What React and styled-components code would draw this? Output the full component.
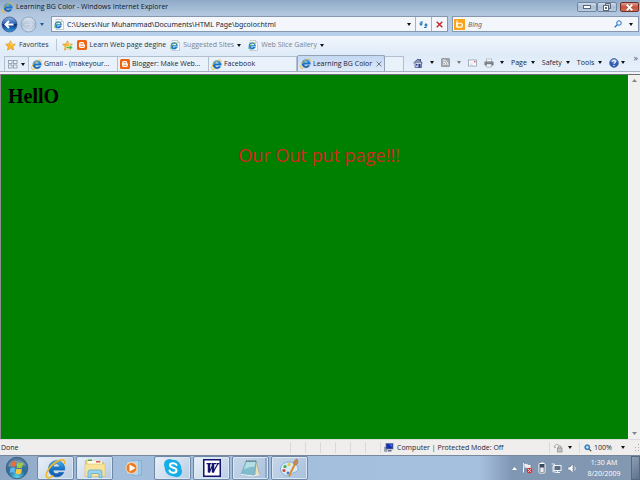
import React from "react";
import styled, { createGlobalStyle } from "styled-components";

const GlobalStyle = createGlobalStyle`
  * {
    box-sizing: border-box;
  }

  body {
    margin: 0;
    font-family: "Open Sans", "Noto Sans", sans-serif;
    font-size: 7px;
    line-height: 10px;
    color: #1c2430;
  }

  button,
  input {
    margin: 0;
    padding: 0;
    border: none;
    background: none;
    font: inherit;
    color: inherit;
  }

  svg {
    display: block;
    flex: none;
  }
`;

/* ---------- icons ---------- */

const IeIcon = ({ size = 11 }) => (
  <svg width={size} height={size} viewBox="0 0 24 24">
    <defs>
      <linearGradient id="ieBlue" x1="0" y1="0" x2="0" y2="1">
        <stop offset="0" stopColor="#4db8f2" />
        <stop offset="0.5" stopColor="#1876ca" />
        <stop offset="1" stopColor="#1259a8" />
      </linearGradient>
    </defs>
    <path
      d="M21.5 16.5A9.2 9.2 0 1 1 22.400 13.800H9.200a3.800 3.800 0 0 0 6.800 2.700zM9.200 10.200h7.600a3.800 3.800 0 0 0-7.600 0z"
      fill="url(#ieBlue)"
      stroke="#1565ae"
      strokeWidth="0.8"
      fillRule="evenodd"
    />
    <path
      d="M22.4 6.3C23.4 1 18.5 1 12.6 4.6 5.2 9.2.6 17 1.5 21c.8 2.8 4.5 1.600 7.5-.5"
      fill="none"
      stroke="#eeb92c"
      strokeWidth="2"
      strokeLinecap="round"
    />
  </svg>
);

const PageIcon = () => (
  <svg width="10" height="11" viewBox="0 0 20 22">
    <path d="M4 1h11l4 4v16H4z" fill="#fff" stroke="#a5afbc" strokeWidth="1.2" />
    <path d="M15 1v4h4" fill="#dfe6ee" stroke="#a5afbc" />
    <path
      d="M13.500 15a6 6 0 1 1 .9-3.200H5a3.200 3.200 0 0 0 5.500 3.200z"
      fill="#fff"
      stroke="#1c7cc9"
      strokeWidth="2.4"
    />
    <path d="M15 7C12 3 1 11 1.500 18" fill="none" stroke="#6db03a" strokeWidth="1.8" />
  </svg>
);

const BloggerIcon = () => (
  <svg width="10" height="10" viewBox="0 0 20 20">
    <rect width="20" height="20" rx="3" fill="#f0640f" />
    <path
      d="M7.5 4h3.5c2 0 3 1.300 3 2.800 0 1.800.3 2 1.500 2 .6 0 .5.5.5 1V12.500A3.500 3.500 0 0 1 12.500 16h-5A3.500 3.500 0 0 1 4 12.500v-5A3.500 3.500 0 0 1 7.500 4z"
      fill="#fff"
    />
    <path d="M7.5 7.5H11M7.5 12.500h5" stroke="#f0640f" strokeWidth="1.8" strokeLinecap="round" />
  </svg>
);

const StarIcon = ({ add }) => (
  <svg width="11" height="11" viewBox="0 0 22 22">
    <path
      d="M11 1.500l2.900 6.300 6.900.8-5.100 4.700 1.400 6.900-6.100-3.500-6.100 3.500 1.400-6.900L1.200 8.600l6.900-.8z"
      fill="#fbb829"
      stroke="#dc8a16"
      strokeWidth="1.2"
    />
    <path d="M11 4l2 5 4 .5" fill="none" stroke="#ffe793" strokeWidth="1.5" />
    {add && (
      <path d="M8 13h7V9l7 6-7 6v-4H8z" fill="#58b947" stroke="#fff" strokeWidth="1" />
    )}
  </svg>
);

const Caret = ({ color = "#111" }) => (
  <svg width="4" height="3" viewBox="0 0 4 3">
    <path d="M0 0h4L2 3z" fill={color} />
  </svg>
);

const ArrowOrb = ({ back }) => (
  <svg width="17" height="17" viewBox="0 0 34 34">
    <defs>
      <linearGradient id="orbBack" x1="0" y1="0" x2="0" y2="1">
        <stop offset="0" stopColor="#8fb4e4" />
        <stop offset="0.45" stopColor="#2c5fb4" />
        <stop offset="0.5" stopColor="#0c2f80" />
        <stop offset="1" stopColor="#2fa4ea" />
      </linearGradient>
      <linearGradient id="orbNext" x1="0" y1="0" x2="0" y2="1">
        <stop offset="0" stopColor="#dfe8f2" />
        <stop offset="0.5" stopColor="#b0c2d8" />
        <stop offset="1" stopColor="#d3e0ee" />
      </linearGradient>
    </defs>
    <circle
      cx="17"
      cy="17"
      r="15"
      fill={back ? "url(#orbBack)" : "url(#orbNext)"}
      stroke={back ? "#3a5580" : "#8496ad"}
      strokeWidth="1.6"
    />
    <path
      d={back ? "M25 17H10M16 10l-7 7 7 7" : "M9 17h15M18 10l7 7-7 7"}
      fill="none"
      stroke={back ? "#fff" : "#cdd9e7"}
      strokeWidth={back ? 4 : 3}
    />
  </svg>
);

const RefreshIcon = () => (
  <svg width="9" height="9" viewBox="0 0 18 18">
    <path d="M8 4H4v6" fill="none" stroke="#2377b8" strokeWidth="2.4" />
    <path d="M0 7h8l-4 5z" fill="#2377b8" />
    <path d="M10 15h4V9" fill="none" stroke="#2377b8" strokeWidth="2.4" />
    <path d="M10 11h8l-4-5z" fill="#2377b8" />
  </svg>
);

const CrossIcon = ({ size = 7, color = "#c5282c", weight = 2 }) => (
  <svg width={size} height={size} viewBox="0 0 10 10">
    <path d="M1 1l8 8M9 1l-8 8" stroke={color} strokeWidth={weight} />
  </svg>
);

const BingIcon = () => (
  <svg width="11" height="11" viewBox="0 0 22 22">
    <rect width="22" height="22" fill="#f7a51c" />
    <path d="M6 3v13" stroke="#fff" strokeWidth="2.4" />
    <path d="M6 8.500h7a3.800 3.800 0 0 1 0 7.600H6z" fill="none" stroke="#fff" strokeWidth="2.4" />
  </svg>
);

const SearchIcon = () => (
  <svg width="8" height="8" viewBox="0 0 16 16">
    <circle cx="10" cy="6" r="4.5" fill="#eef7ff" stroke="#2270b8" strokeWidth="2" />
    <path d="M6.5 9.5L1.5 14.500" stroke="#2270b8" strokeWidth="2.6" />
  </svg>
);

const QuickTabsIcon = () => (
  <svg width="10" height="9" viewBox="0 0 20 18">
    <g fill="#f2f5f9" stroke="#8593a6" strokeWidth="1.6">
      <rect x="1" y="1" width="7" height="6" />
      <rect x="11" y="1" width="7" height="6" />
      <rect x="1" y="10" width="7" height="6" />
      <rect x="11" y="10" width="7" height="6" />
    </g>
  </svg>
);

const HomeIcon = () => (
  <svg width="10" height="10" viewBox="0 0 20 20">
    <path d="M13 2h3v5h-3z" fill="#3a4a78" />
    <path d="M4 9h13v10H4z" fill="#c9d2e6" stroke="#44547e" strokeWidth="1.5" />
    <path d="M1 10l9-8 9 8" fill="#8795bb" stroke="#4b5a82" strokeWidth="1.8" />
    <path d="M11 12h4v7h-4z" fill="#273795" />
    <path d="M6 12h3v3H6z" fill="#35457c" />
  </svg>
);

const FeedIcon = () => (
  <svg width="9" height="9" viewBox="0 0 18 18">
    <rect x="1" y="1" width="16" height="16" rx="1" fill="#a4a8ac" stroke="#6e7378" />
    <circle cx="5.5" cy="12.500" r="1.5" fill="#fff" />
    <path d="M4 8a6 6 0 0 1 6 6M4 4a10 10 0 0 1 10 10" fill="none" stroke="#fff" strokeWidth="1.8" />
  </svg>
);

const MailIcon = () => (
  <svg width="9" height="8" viewBox="0 0 18 16">
    <rect x="1" y="2" width="16" height="12" fill="#fdfdff" stroke="#8d95a6" strokeWidth="1.5" />
    <path d="M4 8h7M4 11h5" stroke="#b9c0cc" />
    <rect x="12" y="4" width="3" height="3" fill="#d35f5f" />
  </svg>
);

const PrintIcon = () => (
  <svg width="10" height="10" viewBox="0 0 20 20">
    <path d="M5 2h10v6H5z" fill="#fff" stroke="#7d8690" />
    <rect x="1" y="7" width="18" height="8" rx="1.5" fill="#6c747e" />
    <path d="M2 9.5h16" stroke="#b5bcc4" />
    <path d="M5 12h10v6H5z" fill="#f4f6f8" stroke="#7d8690" />
  </svg>
);

const HelpIcon = () => (
  <svg width="10" height="10" viewBox="0 0 20 20">
    <circle cx="10" cy="10" r="8.8" fill="#3160b4" stroke="#24447e" />
    <path d="M3 7a7.500 7.500 0 0 1 14 0c-4 3-10 3-14 0z" fill="#7b9fdc" />
    <path d="M7 7.5C7 3.500 13 4 13 7.500c0 2.300-3 2.300-3 4.500" fill="none" stroke="#fff" strokeWidth="2.2" />
    <circle cx="10" cy="15" r="1.4" fill="#fff" />
  </svg>
);

const MonitorIcon = () => (
  <svg width="10" height="9" viewBox="0 0 20 18">
    <path d="M1 8h5v9H1z" fill="#a5adba" stroke="#6c7688" />
    <rect x="4" y="1" width="14" height="11" fill="#1230b4" stroke="#6b7690" strokeWidth="1.5" />
    <path d="M10 3h6v5z" fill="#4e70e6" />
    <path d="M8 14h7v3H8z" fill="#5d6780" />
  </svg>
);

const LockIcon = () => (
  <svg width="10" height="10" viewBox="0 0 20 20">
    <path d="M2 8c2-6 8-6 10-3M2 8l4 1" fill="none" stroke="#8a8d92" strokeWidth="1.5" />
    <rect x="9" y="10" width="9" height="8" fill="#c4c6ca" stroke="#85888c" strokeWidth="1.4" />
    <path d="M11 10V8a2.500 2.500 0 0 1 5 0v2" fill="none" stroke="#85888c" strokeWidth="1.6" />
  </svg>
);

const ZoomIcon = () => (
  <svg width="8" height="8" viewBox="0 0 16 16">
    <circle cx="6.5" cy="6.5" r="5" fill="#4a9be0" stroke="#2263a4" strokeWidth="1.5" />
    <path d="M6.5 4v5M4 6.5h5" stroke="#fff" strokeWidth="1.5" />
    <path d="M10.500 10.500l4 4" stroke="#6c5a48" strokeWidth="2.4" />
  </svg>
);

const GripIcon = () => (
  <svg width="7" height="7" viewBox="0 0 7 7">
    <path d="M5 0h1v1H5zM5 3h1v1H5zM2 3h1v1H2zM5 6h1v1H5zM2 6h1v1H2z" fill="#a9abae" />
  </svg>
);

const WindowsOrb = () => (
  <svg width="24" height="24" viewBox="0 0 48 48">
    <defs>
      <radialGradient id="startOrb" cx="0.5" cy="0.9" r="0.9">
        <stop offset="0" stopColor="#59d2ec" />
        <stop offset="0.45" stopColor="#2a6c9e" />
        <stop offset="1" stopColor="#5b7c9c" />
      </radialGradient>
    </defs>
    <circle cx="24" cy="24" r="21.500" fill="url(#startOrb)" stroke="#2f506f" strokeWidth="1.5" />
    <path d="M6 20a19 17 0 0 1 36 0c-10-4-26 4-36 0z" fill="#fff" opacity="0.25" />
    <path d="M13 12c4-2 7-2 10 0l-2 10c-3-2-6-2-10 0z" fill="#ee6a30" />
    <path d="M25 13c4 2 7 2 12 0l-3 10c-4 2-7 2-11 0z" fill="#9bcb48" />
    <path d="M11 24c4-2 7-2 10 0l-2 10c-3-2-6-2-10 0z" fill="#5fb4ee" />
    <path d="M23 25c4 2 7 2 11 0l-2 10c-4 2-7 2-11 0z" fill="#fbc93b" />
  </svg>
);

const FolderIcon = () => (
  <svg width="24" height="22" viewBox="0 0 48 44">
    <path d="M5 7h13l3 4h20v27H5z" fill="#edd07a" stroke="#c9a548" />
    <path d="M9 8h29v9H9z" fill="#fffbe6" />
    <path d="M10 5h8v3h-8z" fill="#58a946" />
    <path d="M26 8h9v3h-9z" fill="#d95e43" />
    <path d="M4 14h40v25H4z" fill="#f8e39c" stroke="#d1b45e" />
    <path d="M10 41V30a4 4 0 0 1 4-4h20a4 4 0 0 1 4 4v11h-6v-8H16v8z" fill="#9cd3ee" stroke="#5fa5cb" strokeWidth="1.5" />
  </svg>
);

const PlayerIcon = () => (
  <svg width="20" height="18" viewBox="0 0 40 36">
    <path d="M16 3h19v29H16z" fill="#9dc8e6" stroke="#6e9fc6" />
    <path d="M5 5l24-2v30L5 30z" fill="#b7d9ee" stroke="#7babce" />
    <circle cx="15" cy="18" r="11" fill="#ee7c22" stroke="#fbd6ae" strokeWidth="2" />
    <path d="M11 11l12 7-12 7z" fill="#fff" />
  </svg>
);

const SkypeIcon = () => (
  <svg width="20" height="20" viewBox="0 0 40 40">
    <circle cx="13" cy="13" r="11" fill="#14aee8" />
    <circle cx="27" cy="27" r="11" fill="#14aee8" />
    <circle cx="20" cy="20" r="16.500" fill="#14aee8" />
    <path
      d="M27 14c-2-5-13-5-13 0 0 7 13 4 13 11 0 6-12 6-14 0"
      fill="none"
      stroke="#fff"
      strokeWidth="4"
      strokeLinecap="round"
    />
  </svg>
);

const WordIcon = () => (
  <svg width="18" height="18" viewBox="0 0 36 36">
    <rect x="1.5" y="1.500" width="33" height="33" fill="#fff" stroke="#14146e" strokeWidth="3" />
    <path d="M7 9h10M18 9h8M27 9h6" stroke="#14146e" strokeWidth="2.5" />
    <path d="M12 9v18M20 9v18" stroke="#14146e" strokeWidth="5" />
    <path d="M12 27l9-17M20 27l10-18" stroke="#14146e" strokeWidth="2.5" />
  </svg>
);

const NotepadIcon = () => (
  <svg width="21" height="19" viewBox="0 0 42 38">
    <path d="M32 4l7 27-9 4z" fill="#e9e3bd" stroke="#96957c" />
    <path d="M12 4h21l-6 30-25-3z" fill="#7fbccd" stroke="#6b9aa8" />
    <path d="M13 6h18l-2 10C20 14 15 20 8 20z" fill="#b4dde6" />
    <path d="M2 31l25 3 12-3" fill="none" stroke="#f2f6f7" strokeWidth="2" />
    <path d="M12 4h21" stroke="#5d6f76" strokeWidth="2.5" strokeDasharray="2 1" />
  </svg>
);

const PaintIcon = () => (
  <svg width="20" height="20" viewBox="0 0 40 40">
    <path
      d="M18 8C7 8 1 15 1 22s7 14 17 14c7 0 5-6 9-7 5-1 9-2 9-8S29 8 18 8z"
      fill="#d7eaf6"
      stroke="#74a3c7"
      strokeWidth="1.5"
    />
    <circle cx="10" cy="17" r="3.2" fill="#49a84d" />
    <circle cx="18" cy="13" r="3" fill="#ecc332" />
    <circle cx="8" cy="25" r="3.2" fill="#d8493b" />
    <circle cx="16" cy="30" r="3" fill="#3e83cd" />
    <path d="M18 36l13-26" stroke="#d98b2d" strokeWidth="4" />
    <path d="M27 12c0-5 3-9 7-10 3 5 2 9-2 12z" fill="#c98a55" stroke="#9a6336" />
  </svg>
);

const FlagIcon = () => (
  <svg width="11" height="12" viewBox="0 0 22 24">
    <path d="M3 2v19" stroke="#fff" strokeWidth="2" />
    <path d="M4 3h6l2 2h6v9h-6l-2-2H4z" fill="#e9eef4" stroke="#66788f" />
    <circle cx="15" cy="17" r="5.5" fill="#d8332c" />
    <path d="M12.500 14.500l5 5M17.500 14.500l-5 5" stroke="#fff" strokeWidth="1.8" />
  </svg>
);

const BatteryIcon = () => (
  <svg width="8" height="12" viewBox="0 0 16 24">
    <path d="M6 1h5v3H6z" fill="#fff" />
    <rect x="2" y="3" width="12" height="19" rx="1.5" fill="#3b4a5e" stroke="#fff" strokeWidth="2" />
    <path d="M4.5 11h7v9h-7z" fill="#e8edf3" />
  </svg>
);

const NetworkIcon = () => (
  <svg width="11" height="11" viewBox="0 0 22 22">
    <rect x="6" y="5" width="14" height="10" fill="#5c6e85" stroke="#f1f4f8" strokeWidth="2" />
    <path d="M9 19h9M13 15v4" stroke="#f1f4f8" strokeWidth="2" />
    <path d="M1 2h6v4H4v12h5" fill="none" stroke="#f1f4f8" strokeWidth="1.8" />
  </svg>
);

const SpeakerIcon = () => (
  <svg width="10" height="11" viewBox="0 0 20 22">
    <path d="M2 8h4l6-6v18l-6-6H2z" fill="#f7f9fb" stroke="#61728a" />
    <path d="M15 7c2 2 2 6 0 8" fill="none" stroke="#f1f4f8" strokeWidth="1.8" />
  </svg>
);

const ScrollArrow = ({ down }) => (
  <svg width="5" height="3" viewBox="0 0 5 3">
    <path d={down ? "M0 0h5L2.5 3z" : "M0 3h5L2.5 0z"} fill="#82868c" />
  </svg>
);

/* ---------- window frame ---------- */

const Screen = styled.div`
  display: flex;
  flex-direction: column;
  min-height: 100vh;
  background: #f0f2f5;
`;

const TitleBar = styled.header`
  display: flex;
  align-items: center;
  gap: 3px;
  height: 14px;
  padding: 0 1px 0 2px;
  background: linear-gradient(#8fa9c7, #b2c7df);
`;

const Title = styled.h1`
  flex: 1;
  margin: 0;
  font-size: 7px;
  font-weight: 400;
  color: #10151c;
`;

const WindowButton = styled.button`
  display: flex;
  align-items: center;
  justify-content: center;
  width: ${(p) => (p.$close ? 19 : 20)}px;
  height: 10px;
  margin-left: ${(p) => (p.$close ? 0 : -3)}px;
  border: 1px solid ${(p) => (p.$close ? "#6e2f2a" : "#71859e")};
  border-radius: 2px;
  background: ${(p) =>
    p.$close
      ? "linear-gradient(#dca196, #c4513d 50%, #cf6d50)"
      : "linear-gradient(#cfdcea, #a9bdd5 50%, #bccde1)"};
`;

const AddressRow = styled.div`
  display: flex;
  align-items: center;
  height: 22px;
  padding: 0 1px 2px;
  background: linear-gradient(#b2c7df, #b9d0ea);
`;

const RoundButton = styled.button`
  width: 17px;
  margin-right: 2px;
`;

const HistoryButton = styled.button`
  width: 12px;
  padding-left: 1px;
`;

const AddressBox = styled.div`
  display: flex;
  align-items: center;
  flex: 1;
  height: 16px;
  padding-left: 2px;
  border: 1px solid #8598b0;
  background: #f3f7fc;
`;

const AddressInput = styled.input`
  flex: 1;
  min-width: 0;
  height: 14px;
  padding-left: 3px;
  outline: none;
  font-family: "Noto Sans", "Open Sans", sans-serif;
  font-size: 7px;
`;

const BoxButton = styled.button`
  display: flex;
  align-items: center;
  justify-content: center;
  width: ${(p) => p.$width || 16}px;
  height: 14px;
  border-left: ${(p) => (p.$divided ? "1px solid #a3b2c6" : "none")};
`;

const SearchBox = styled(AddressBox)`
  flex: 0 1 187px;
  margin-left: 4px;
  padding-left: 1px;
`;

const SearchInput = styled(AddressInput)`
  font-style: italic;

  &::placeholder {
    color: #63686f;
    opacity: 1;
  }
`;

/* ---------- favorites and tabs ---------- */

const FavoritesBar = styled.nav`
  display: flex;
  align-items: center;
  height: 18px;
  padding: 0 5px;
  background: linear-gradient(#f2f7fd, #dfebf8);
`;

const FavoriteLink = styled.a`
  display: flex;
  align-items: center;
  gap: 3px;
  margin-right: ${(p) => p.$after || 0}px;
  color: ${(p) => (p.$muted ? "#7d828a" : "#2a323d")};
  text-decoration: none;
  white-space: nowrap;
`;

const BarDivider = styled.span`
  width: 1px;
  height: 12px;
  margin-right: 5px;
  background: #b9c7d8;
`;

const TabRow = styled.div`
  display: flex;
  align-items: flex-end;
  height: 18px;
  padding-left: 4px;
  border-bottom: 1px solid #a3b1c2;
  background: linear-gradient(#dfebf8, #e6f0fb);
`;

const QuickTabs = styled.button`
  display: flex;
  align-items: center;
  justify-content: space-between;
  width: 25px;
  height: 15px;
  padding: 0 3px;
  border: 1px solid #b2bfce;
  border-bottom: none;
`;

const Tab = styled.button`
  display: flex;
  align-items: center;
  gap: 2px;
  flex: 0 1 ${(p) => p.$width || 88}px;
  min-width: 0;
  height: ${(p) => (p.$active ? 16 : 15)}px;
  padding: 0 2px;
  border: 1px solid ${(p) => (p.$active ? "#93a2b6" : "#b2bfce")};
  border-left-width: ${(p) => (p.$active ? 1 : 0)}px;
  border-bottom: none;
  border-radius: ${(p) => (p.$active ? "2px 2px 0 0" : "0")};
  background: ${(p) => (p.$active ? "linear-gradient(#c3d8f3, #dfeafa)" : "#e9f1fa")};
  text-align: left;
  white-space: nowrap;
`;

const TabLabel = styled.span`
  flex: 1;
`;

const CommandBar = styled.div`
  display: flex;
  align-items: center;
  align-self: stretch;
  flex: 1;
  gap: 7px;
  padding-left: 9px;
`;

const Command = styled.button`
  display: flex;
  align-items: center;
  gap: ${(p) => p.$gap || 4}px;
  white-space: nowrap;
`;

const Overflow = styled.button`
  align-self: flex-start;
  margin-left: auto;
  padding-right: 2px;
  font-size: 9px;
  line-height: 8px;
  color: #4b5f86;
`;

/* ---------- document ---------- */

const Viewport = styled.div`
  display: flex;
  flex: 1;
  margin-top: 2px;
  border-top: 1px solid #6c7075;
  border-left: 1px solid #8d8d92;
`;

const Page = styled.main`
  flex: 1;
  padding: 9px 7px;
  background: #008000;
`;

const Heading = styled.h2`
  margin: 0;
  font-family: "Liberation Serif", serif;
  font-size: 20px;
  line-height: 24px;
  color: #000;
`;

const Caption = styled.p`
  margin: 34px 0 0;
  padding-left: 9px;
  font-size: 18px;
  line-height: 26px;
  text-align: center;
  color: #d0281c;
`;

const ScrollTrack = styled.div`
  display: flex;
  flex-direction: column;
  justify-content: space-between;
  align-items: center;
  width: 12px;
  padding: 4px 0;
  border-left: 1px solid #fbfbfb;
  background: #f0f0ef;
`;

/* ---------- status bar and taskbar ---------- */

const StatusBar = styled.footer`
  display: flex;
  align-items: center;
  height: 16px;
  padding-left: 1px;
  border-top: 1px solid #dcdcdc;
  background: #f0eeed;
`;

const StatusText = styled.span`
  flex: 1;
`;

const StatusCell = styled.div`
  display: flex;
  align-items: center;
  gap: 3px;
  width: ${(p) => p.$width || 15}px;
  height: 11px;
  padding-left: 3px;
  border-left: 1px solid #dad8d8;
  white-space: nowrap;
`;

const ZoomCell = styled(StatusCell)`
  justify-content: space-between;
  padding: 0 8px 0 4px;
`;

const StatusButton = styled.button`
  display: flex;
  align-items: center;
  gap: ${(p) => p.$gap || 5}px;
`;

const Taskbar = styled.nav`
  display: flex;
  align-items: center;
  height: 25px;
  border-top: 1px solid #78899d;
  background: linear-gradient(
    90deg,
    #8ca5c2,
    #a2bddc 15%,
    #a5c0df 75%,
    #8097b3 80%,
    #8398b1
  );
`;

const StartButton = styled.button`
  width: 32px;
  padding-left: 5px;
  margin-right: 5px;
`;

const TaskButton = styled.button`
  display: flex;
  align-items: center;
  justify-content: center;
  width: 37px;
  height: 24px;
  margin-right: 2px;
  border: 1px solid ${(p) => (p.$idle ? "transparent" : "#6f88a6")};
  border-radius: 2px;
  background: ${(p) => {
    if (p.$idle) return "none";
    return p.$lit
      ? "linear-gradient(135deg, #e9f0f8, #b9cde4)"
      : "linear-gradient(135deg, #c6d7ea, #a9c1dc)";
  }};
  box-shadow: ${(p) => {
    if (p.$idle) return "none";
    const rim = "inset 0 0 0 1px #dbe7f3";
    return p.$stacked ? `${rim}, inset -3px 0 0 #8fa9c6` : rim;
  }};
`;

const Tray = styled.div`
  display: flex;
  align-items: center;
  gap: 5px;
  margin-left: auto;
`;

const TrayButton = styled.button`
  display: block;
`;

const Clock = styled.time`
  width: 44px;
  line-height: 11px;
  text-align: center;
  color: #fff;
`;

const ShowDesktop = styled.button`
  width: 9px;
  height: 24px;
  border: 1px solid #566a82;
  background: linear-gradient(135deg, #8c9eb4, #5f738d);
`;

const tabs = [
  { label: "Gmail - (makeyour...", icon: <IeIcon />, width: 89 },
  { label: "Blogger: Make Web...", icon: <BloggerIcon />, width: 91 },
  { label: "Facebook", icon: <IeIcon />, width: 88 },
  { label: "Learning BG Color", icon: <IeIcon />, width: 88, active: true },
];

const tasks = [
  { name: "Internet Explorer", icon: <IeIcon size={21} />, lit: true },
  { name: "Explorer", icon: <FolderIcon />, lit: true },
  { name: "Media Player", icon: <PlayerIcon />, idle: true },
  { name: "Skype", icon: <SkypeIcon />, lit: true },
  { name: "Word", icon: <WordIcon />, lit: true },
  { name: "Notepad", icon: <NotepadIcon />, stacked: true },
  { name: "Paint", icon: <PaintIcon /> },
];

function App() {
  return (
    <Screen>
      <GlobalStyle />
      <TitleBar>
        <IeIcon />
        <Title>Learning BG Color - Windows Internet Explorer</Title>
        <WindowButton aria-label="Minimize">
          <svg width="8" height="4" viewBox="0 0 8 4">
            <rect x="0.5" y="0.5" width="7" height="3" fill="#fff" stroke="#5a6677" />
          </svg>
        </WindowButton>
        <WindowButton aria-label="Restore">
          <svg width="8" height="8" viewBox="0 0 8 8">
            <path d="M2.5 2.5v-2h5v5h-2" fill="none" stroke="#5a6677" />
            <rect x="0.5" y="2.5" width="5" height="5" fill="#fff" stroke="#5a6677" />
            <path d="M2 4h2v2H2z" fill="#5a6677" />
          </svg>
        </WindowButton>
        <WindowButton $close aria-label="Close">
          <CrossIcon size={7} color="#fff" weight={2.5} />
        </WindowButton>
      </TitleBar>

      <AddressRow>
        <RoundButton aria-label="Back">
          <ArrowOrb back />
        </RoundButton>
        <RoundButton aria-label="Forward">
          <ArrowOrb />
        </RoundButton>
        <HistoryButton aria-label="Recent pages">
          <Caret color="#1c5c9c" />
        </HistoryButton>
        <AddressBox>
          <PageIcon />
          <AddressInput
            aria-label="Address"
            defaultValue="C:\Users\Nur Muhammad\Documents\HTML Page\bgcolor.html"
          />
          <BoxButton $width={12} aria-label="Show addresses">
            <Caret />
          </BoxButton>
          <BoxButton $divided aria-label="Refresh">
            <RefreshIcon />
          </BoxButton>
          <BoxButton $divided aria-label="Stop">
            <CrossIcon />
          </BoxButton>
        </AddressBox>
        <SearchBox>
          <BingIcon />
          <SearchInput aria-label="Search" placeholder="Bing" />
          <BoxButton $width={12} aria-label="Search">
            <SearchIcon />
          </BoxButton>
          <BoxButton $width={14} aria-label="Search options">
            <Caret />
          </BoxButton>
        </SearchBox>
      </AddressRow>

      <FavoritesBar>
        <FavoriteLink href="#favorites" $after={7}>
          <StarIcon />
          Favorites
        </FavoriteLink>
        <BarDivider />
        <FavoriteLink href="#add" aria-label="Add to favorites" $after={4}>
          <StarIcon add />
        </FavoriteLink>
        <FavoriteLink href="#learn" $after={4}>
          <BloggerIcon />
          Learn Web page degine
        </FavoriteLink>
        <FavoriteLink href="#suggested" $muted $after={7}>
          <PageIcon />
          Suggested Sites
          <Caret />
        </FavoriteLink>
        <FavoriteLink href="#slices" $muted>
          <PageIcon />
          Web Slice Gallery
          <Caret />
        </FavoriteLink>
      </FavoritesBar>

      <TabRow>
        <QuickTabs aria-label="Quick tabs">
          <QuickTabsIcon />
          <Caret />
        </QuickTabs>
        {tabs.map((tab) => (
          <Tab key={tab.label} $width={tab.width} $active={tab.active}>
            {tab.icon}
            <TabLabel>{tab.label}</TabLabel>
            {tab.active && <CrossIcon size={6} color="#5f6b7b" weight={1.5} />}
          </Tab>
        ))}
        <Tab $width={19} aria-label="New tab" />
        <CommandBar>
          <Command $gap={7} aria-label="Home">
            <HomeIcon />
            <Caret />
          </Command>
          <Command $gap={7} aria-label="Feeds">
            <FeedIcon />
            <Caret color="#777" />
          </Command>
          <Command aria-label="Read mail">
            <MailIcon />
          </Command>
          <Command $gap={6} aria-label="Print">
            <PrintIcon />
            <Caret />
          </Command>
          <Command>
            Page
            <Caret />
          </Command>
          <Command>
            Safety
            <Caret />
          </Command>
          <Command>
            Tools
            <Caret />
          </Command>
          <Command $gap={2} aria-label="Help">
            <HelpIcon />
            <Caret />
          </Command>
          <Overflow>»</Overflow>
        </CommandBar>
      </TabRow>

      <Viewport>
        <Page>
          <Heading>HellO</Heading>
          <Caption>Our Out put page!!!</Caption>
        </Page>
        <ScrollTrack>
          <ScrollArrow />
          <ScrollArrow down />
        </ScrollTrack>
      </Viewport>

      <StatusBar>
        <StatusText>Done</StatusText>
        <StatusCell />
        <StatusCell />
        <StatusCell />
        <StatusCell />
        <StatusCell />
        <StatusCell />
        <StatusCell $width={169}>
          <MonitorIcon />
          Computer | Protected Mode: Off
        </StatusCell>
        <StatusCell $width={30}>
          <StatusButton aria-label="Privacy report">
            <LockIcon />
            <Caret />
          </StatusButton>
        </StatusCell>
        <ZoomCell $width={54}>
          <StatusButton $gap={2}>
            <ZoomIcon />
            100%
          </StatusButton>
          <StatusButton aria-label="Zoom level">
            <Caret />
          </StatusButton>
        </ZoomCell>
        <GripIcon />
      </StatusBar>

      <Taskbar>
        <StartButton aria-label="Start">
          <WindowsOrb />
        </StartButton>
        {tasks.map((task) => (
          <TaskButton
            key={task.name}
            aria-label={task.name}
            $lit={task.lit}
            $idle={task.idle}
            $stacked={task.stacked}
          >
            {task.icon}
          </TaskButton>
        ))}
        <Tray>
          <TrayButton aria-label="Show hidden icons">
            <svg width="5" height="3" viewBox="0 0 5 3">
              <path d="M0 3h5L2.5 0z" fill="#fff" />
            </svg>
          </TrayButton>
          <TrayButton aria-label="Action center">
            <FlagIcon />
          </TrayButton>
          <TrayButton aria-label="Battery">
            <BatteryIcon />
          </TrayButton>
          <TrayButton aria-label="Network">
            <NetworkIcon />
          </TrayButton>
          <TrayButton aria-label="Volume">
            <SpeakerIcon />
          </TrayButton>
          <Clock>
            1:30 AM
            <br />
            8/20/2009
          </Clock>
          <ShowDesktop aria-label="Show desktop" />
        </Tray>
      </Taskbar>
    </Screen>
  );
}

export default App;
